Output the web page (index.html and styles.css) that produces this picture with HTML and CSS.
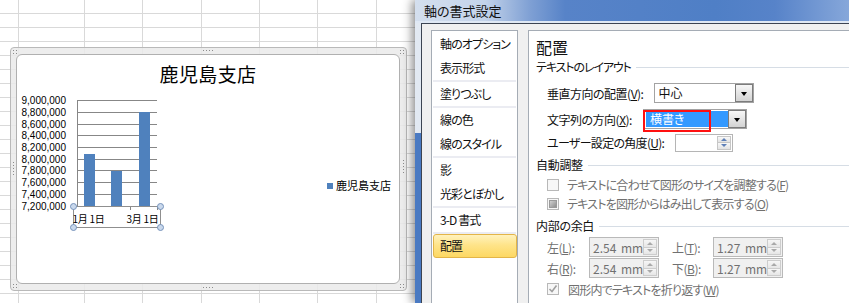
FILE: index.html
```html
<!DOCTYPE html>
<html lang="ja">
<head>
<meta charset="utf-8">
<title>軸の書式設定</title>
<link rel="stylesheet" href="styles.css">
</head>
<body>
<div class="sheet">
  <div class="chart-frame">
    <span class="grip grip-tl"></span>
    <span class="grip grip-tm"></span>
    <span class="grip grip-tr"></span>
    <span class="grip grip-ml"></span>
    <span class="grip grip-mr"></span>
    <span class="grip grip-bl"></span>
    <span class="grip grip-bm"></span>
    <span class="grip grip-br"></span>
    <div class="chart">
      <svg class="plot" width="382" height="228" viewBox="17 55 382 228">
        <text class="chart-title" x="208" y="81.5" text-anchor="middle">鹿児島支店</text>
        <g class="gridlines">
          <line x1="77" y1="100.5" x2="157" y2="100.5"/>
          <line x1="77" y1="112.5" x2="157" y2="112.5"/>
          <line x1="77" y1="124.5" x2="157" y2="124.5"/>
          <line x1="77" y1="135.5" x2="157" y2="135.5"/>
          <line x1="77" y1="147.5" x2="157" y2="147.5"/>
          <line x1="77" y1="159.5" x2="157" y2="159.5"/>
          <line x1="77" y1="170.5" x2="157" y2="170.5"/>
          <line x1="77" y1="182.5" x2="157" y2="182.5"/>
          <line x1="77" y1="194.5" x2="157" y2="194.5"/>
        </g>
        <g class="ylabels">
          <text x="66" y="104">9,000,000</text>
          <text x="66" y="116">8,800,000</text>
          <text x="66" y="128">8,600,000</text>
          <text x="66" y="139">8,400,000</text>
          <text x="66" y="151">8,200,000</text>
          <text x="66" y="163">8,000,000</text>
          <text x="66" y="174">7,800,000</text>
          <text x="66" y="186">7,600,000</text>
          <text x="66" y="198">7,400,000</text>
          <text x="66" y="210">7,200,000</text>
        </g>
        <g class="bars">
          <rect x="84" y="154" width="11" height="52"/>
          <rect x="111" y="171" width="11" height="35"/>
          <rect x="139" y="112" width="11" height="94"/>
        </g>
        <g class="axes">
          <line x1="77.5" y1="100" x2="77.5" y2="207"/>
          <line x1="77" y1="206.5" x2="158" y2="206.5"/>
          <line x1="130.5" y1="206" x2="130.5" y2="210"/>
          <line x1="157.5" y1="206" x2="157.5" y2="210"/>
        </g>
        <rect class="selection" x="73.5" y="206.5" width="87" height="21"/>
        <g class="catlabels">
          <text x="88.5" y="223" text-anchor="middle">1月 1日</text>
          <text x="142.5" y="223" text-anchor="middle">3月 1日</text>
        </g>
        <g class="handles">
          <circle cx="73.5" cy="206.5" r="3"/>
          <circle cx="160.5" cy="206.5" r="3"/>
          <circle cx="73.5" cy="227.5" r="3"/>
          <circle cx="160.5" cy="227.5" r="3"/>
        </g>
        <rect class="legend-key" x="327" y="183" width="6" height="6"/>
        <text class="legend-text" x="336" y="189.5">鹿児島支店</text>
      </svg>
    </div>
  </div>
</div>

<div class="dialog">
  <div class="titlebar">軸の書式設定</div>
  <div class="window-body">
    <div class="frame-side"></div>
    <div class="client">
      <ul class="nav">
        <li class="nav-item">軸のオプション</li>
        <li class="nav-item">表示形式</li>
        <li class="nav-sep"></li>
        <li class="nav-item">塗りつぶし</li>
        <li class="nav-sep"></li>
        <li class="nav-item">線の色</li>
        <li class="nav-item">線のスタイル</li>
        <li class="nav-sep"></li>
        <li class="nav-item">影</li>
        <li class="nav-item">光彩とぼかし</li>
        <li class="nav-sep"></li>
        <li class="nav-item">3-D 書式</li>
        <li class="nav-sep"></li>
        <li class="nav-item is-selected">配置</li>
      </ul>

      <div class="panel">
        <h2 class="panel-title">配置</h2>

        <div class="group-title is-kana">テキストのレイアウト</div>
        <div class="row">
          <span class="label">垂直方向の配置(<u>V</u>):</span>
          <div class="combo combo-valign">
            <span class="combo-text">中心</span>
            <span class="combo-btn"></span>
          </div>
        </div>
        <div class="row">
          <span class="label">文字列の方向(<u>X</u>):</span>
          <div class="combo combo-dir">
            <span class="combo-text is-highlight">横書き</span>
            <span class="combo-btn"></span>
            <span class="annotation"></span>
          </div>
        </div>
        <div class="row row-angle">
          <span class="label label-kana">ユーザー設定の角度(<u>U</u>):</span>
          <div class="spin spin-angle">
            <span class="spin-value"></span>
            <span class="spin-btns"><span class="spin-up"></span><span class="spin-down"></span></span>
          </div>
        </div>

        <div class="group-title group-gap">自動調整</div>
        <div class="check-row">
          <span class="cb"></span>
          <span class="check-text">テキストに合わせて図形のサイズを調整する(<u>F</u>)</span>
        </div>
        <div class="check-row">
          <span class="cb cb-mixed"><span class="cb-fill"></span></span>
          <span class="check-text">テキストを図形からはみ出して表示する(<u>O</u>)</span>
        </div>

        <div class="group-title group-gap">内部の余白</div>
        <div class="margins">
          <span class="label disabled">左(<u>L</u>):</span>
          <div class="spin spin-margin">
            <span class="spin-value">2.54 mm</span>
            <span class="spin-btns"><span class="spin-up"></span><span class="spin-down"></span></span>
          </div>
          <span class="label disabled">上(<u>T</u>):</span>
          <div class="spin spin-margin">
            <span class="spin-value">1.27 mm</span>
            <span class="spin-btns"><span class="spin-up"></span><span class="spin-down"></span></span>
          </div>
          <span class="label disabled">右(<u>R</u>):</span>
          <div class="spin spin-margin">
            <span class="spin-value">2.54 mm</span>
            <span class="spin-btns"><span class="spin-up"></span><span class="spin-down"></span></span>
          </div>
          <span class="label disabled">下(<u>B</u>):</span>
          <div class="spin spin-margin">
            <span class="spin-value">1.27 mm</span>
            <span class="spin-btns"><span class="spin-up"></span><span class="spin-down"></span></span>
          </div>
        </div>
        <div class="check-row check-wrap">
          <span class="cb cb-checked">
            <svg width="10" height="10" viewBox="0 0 10 10"><polyline points="1.5,5 4,7.5 8.5,1.5"/></svg>
          </span>
          <span class="check-text">図形内でテキストを折り返す(<u>W</u>)</span>
        </div>
      </div>
    </div>
  </div>
</div>
</body>
</html>
```

FILE: styles.css
```css
* {
  box-sizing: border-box;
}

html,
body {
  margin: 0;
  padding: 0;
}

body {
  width: 849px;
  height: 303px;
  overflow: hidden;
  display: flex;
  background: #fff;
  font-family: "Noto Sans CJK JP", "Noto Sans", sans-serif;
  font-feature-settings: "palt";
  font-size: 12px;
  color: #000;
}

/* ---------- spreadsheet ---------- */
.sheet {
  width: 415px;
  height: 303px;
  flex-shrink: 0;
  padding: 47px 0 0 10px;
  background-color: #fff;
  background-image:
    linear-gradient(to bottom, transparent 0, transparent 13px, #d9d9d9 13px, #d9d9d9 14px),
    linear-gradient(#d9d9d9, #d9d9d9),
    repeating-linear-gradient(to right, #d9d9d9 0, #d9d9d9 1px, transparent 1px, transparent 58.33px);
  background-size: 100% 14px, 1px 100%, 331px 100%;
  background-position: 0 0, 18px 0, 84px 0;
  background-repeat: repeat, no-repeat, no-repeat;
}

.chart-frame {
  position: relative;
  width: 397px;
  height: 244px;
  border: 1px solid #b9b9b9;
  border-radius: 4px;
  background: rgba(234, 234, 234, 0.86);
  padding: 6px 6px 6px 5px;
}

.chart {
  height: 100%;
  background: #fff;
  border: 1px solid #b0b0b0;
  border-radius: 6px;
  overflow: hidden;
}

.plot {
  display: block;
}

.grip {
  position: absolute;
  background-image: radial-gradient(circle, #8c8c8c 0.7px, transparent 0.9px);
  background-size: 3px 3px;
}

.grip-tl { left: 1px; top: 1px; width: 6px; height: 6px; }
.grip-tr { right: 1px; top: 1px; width: 6px; height: 6px; }
.grip-bl { left: 1px; bottom: 1px; width: 6px; height: 6px; }
.grip-br { right: 1px; bottom: 1px; width: 6px; height: 6px; }
.grip-tm { left: 191px; top: 1px; width: 13px; height: 3px; }
.grip-bm { left: 191px; bottom: 1px; width: 13px; height: 3px; }
.grip-ml { left: 1px; top: 113px; width: 3px; height: 15px; }
.grip-mr { right: 1px; top: 111px; width: 3px; height: 15px; }

.chart-title {
  font-family: "Noto Sans CJK JP", sans-serif;
  font-size: 19px;
  letter-spacing: 0.4px;
  fill: #000;
}

.gridlines line,
.axes line {
  stroke: #878787;
  stroke-width: 1;
}

.ylabels text {
  font-family: "Liberation Sans", Arial, sans-serif;
  font-size: 10px;
  text-anchor: end;
  fill: #000;
}

.bars rect {
  fill: #4f81bd;
}

.selection {
  fill: none;
  stroke: #8f8f8f;
  stroke-width: 1;
}

.catlabels text {
  font-family: "Noto Sans CJK JP", sans-serif;
  font-size: 10px;
  letter-spacing: -0.3px;
  fill: #000;
}

.handles circle {
  fill: #c9d8ec;
  stroke: #7693bb;
  stroke-width: 1;
}

.legend-key {
  fill: #4f81bd;
}

.legend-text {
  font-family: "Noto Sans CJK JP", sans-serif;
  font-size: 11px;
  fill: #000;
}

/* ---------- dialog ---------- */
.dialog {
  position: relative;
  z-index: 1;
  width: 470px;
  flex-shrink: 0;
  display: flex;
  flex-direction: column;
  box-shadow: -3px 0 9px rgba(0, 0, 0, 0.45);
}

.titlebar {
  height: 21px;
  line-height: 21px;
  padding-left: 9px;
  font-size: 13px;
  color: #111;
  background: linear-gradient(90deg,
    #d4dfee 0, #c3d3ea 70px, #7fa0d4 115px, #5783c8 150px,
    #4f7fc6 300px, #5783c9 360px, #86a7da 434px, #8dadde 470px);
}

.window-body {
  flex: 1;
  display: flex;
  border-top: 2px solid #dfe8f4;
}

.frame-side {
  width: 6px;
  background: linear-gradient(#e2e9f2 0, #e2e9f2 110px, #4a7ac2 110px, #4a7ac2 100%);
}

.client {
  flex: 1;
  display: flex;
  gap: 10px;
  background: #f0f0f0;
  border-top: 1px solid #3c4452;
  border-left: 1px solid #3c4452;
  padding: 6px 0 0 9px;
}

/* nav list */
.nav {
  width: 87px;
  flex-shrink: 0;
  margin: 0;
  padding: 1px;
  list-style: none;
  background: #fff;
  border: 1px solid #a5acb5;
  border-bottom: none;
  letter-spacing: -0.9px;
  color: #111;
}

.nav-item {
  height: 24px;
  line-height: 24px;
  padding-left: 7px;
  white-space: nowrap;
}

.nav-sep {
  height: 2px;
  background: #ebecf2;
}

.nav-item.is-selected {
  line-height: 22px;
  padding-left: 6px;
  margin-right: -1px;
  border: 1px solid #e3b548;
  border-radius: 3px;
  background: linear-gradient(#fff2bd 0, #fee48a 45%, #fdd863 100%);
}

/* right panel */
.panel {
  flex: 1;
  background: #fff;
  border: 1px solid #a5acb5;
  border-right: none;
  border-bottom: none;
  padding: 6px 0 0 7px;
  color: #111;
}

.panel-title {
  margin: 0;
  font-size: 16px;
  font-weight: normal;
  line-height: 20px;
  height: 20px;
}

.group-title {
  display: flex;
  align-items: center;
  height: 20px;
  line-height: 20px;
  white-space: nowrap;
  letter-spacing: -0.3px;
}

.group-title.is-kana {
  letter-spacing: -1.1px;
}

.group-title::after {
  content: "";
  flex: 1;
  height: 1px;
  margin-left: 5px;
  background: #d6dde5;
}

.group-gap {
  margin-top: 3px;
}

.row {
  display: flex;
  align-items: center;
  gap: 11px;
  height: 20px;
  margin-top: 6px;
  padding-left: 11px;
  white-space: nowrap;
}

.row-angle {
  height: 19px;
  margin-top: 4px;
}

.label {
  letter-spacing: -0.5px;
}

.label.label-kana {
  letter-spacing: -0.7px;
}

.label.disabled {
  color: #707070;
}

u {
  text-decoration: underline;
  text-underline-offset: 1px;
}

/* combo boxes */
.combo {
  position: relative;
  display: flex;
  height: 20px;
  border: 1px solid #a3a3a3;
  background: #fff;
}

.combo-valign {
  width: 100px;
}

.combo-dir {
  width: 104px;
  padding: 1px 0 1px 2px;
}

.combo-text {
  flex: 1;
  padding-left: 3px;
  line-height: 18px;
}

.combo-text.is-highlight {
  background: #3399ff;
  color: #fff;
  line-height: 16px;
  padding-left: 4px;
}

.combo-btn {
  width: 18px;
  height: 18px;
  align-self: center;
  border: 1px solid #7c7c7c;
  background: linear-gradient(#f7f7f7, #d3d3d3);
  display: flex;
  align-items: center;
  justify-content: center;
}

.combo-btn::after {
  content: "";
  border-left: 3.5px solid transparent;
  border-right: 3.5px solid transparent;
  border-top: 4px solid #000;
  margin-top: 1px;
}

.annotation {
  position: absolute;
  left: -1px;
  top: 0;
  width: 68px;
  height: 22px;
  border: 2px solid #ff1010;
}

/* spin boxes */
.spin {
  display: flex;
  border: 1px solid #b5b5b5;
  background: #fff;
  padding: 1px 1px 1px 0;
}

.spin-angle {
  width: 58px;
  height: 18px;
}

.spin-margin {
  width: 70px;
  height: 20px;
  background: #f0f0f0;
  border-color: #b9b9b9;
}

.spin-value {
  flex: 1;
  padding-left: 3px;
  line-height: 16px;
  color: #707070;
  white-space: nowrap;
  word-spacing: 2px;
}

.spin-margin .spin-value {
  line-height: 18px;
}

.spin-btns {
  width: 14px;
  display: flex;
  flex-direction: column;
}

.spin-btns > span {
  flex: 1;
  display: flex;
  align-items: center;
  justify-content: center;
  border: 1px solid #c6c6c6;
  background: linear-gradient(#f8f8f8, #e2e2e2);
}

.spin-btns > span + span {
  border-top: none;
}

.spin-up::after {
  content: "";
  border-left: 3px solid transparent;
  border-right: 3px solid transparent;
  border-bottom: 3px solid #5f80b8;
}

.spin-down::after {
  content: "";
  border-left: 3px solid transparent;
  border-right: 3px solid transparent;
  border-top: 3px solid #5f80b8;
}

.spin-margin .spin-btns > span {
  border-color: #cdcdcd;
  background: linear-gradient(#f6f6f6, #e6e6e6);
}

.spin-margin .spin-up::after {
  border-bottom-color: #a9a9a9;
}

.spin-margin .spin-down::after {
  border-top-color: #a9a9a9;
}

/* margins grid */
.margins {
  display: grid;
  grid-template-columns: 42px 83px 41px 71px;
  grid-auto-rows: 20px;
  row-gap: 1px;
  align-items: center;
  margin-top: 1px;
  padding-left: 11px;
  white-space: nowrap;
}

/* checkboxes */
.check-row {
  display: flex;
  align-items: center;
  gap: 8px;
  height: 19px;
  padding-left: 11px;
  color: #707070;
  white-space: nowrap;
}

.check-text {
  letter-spacing: -0.8px;
}

.check-wrap {
  height: 20px;
  margin-top: 1px;
  gap: 9px;
}

.cb {
  width: 12px;
  height: 12px;
  flex-shrink: 0;
  border: 1px solid #b8b8b8;
  background: #f7f7f7;
  display: flex;
  align-items: center;
  justify-content: center;
}

.cb-fill {
  width: 8px;
  height: 8px;
  border: 1px solid #9a9a9a;
  background: linear-gradient(135deg, #d0d0d0, #8e8e8e);
}

.cb-checked svg {
  display: block;
}

.cb-checked polyline {
  fill: none;
  stroke: #a0a0a0;
  stroke-width: 1.6;
}
```
